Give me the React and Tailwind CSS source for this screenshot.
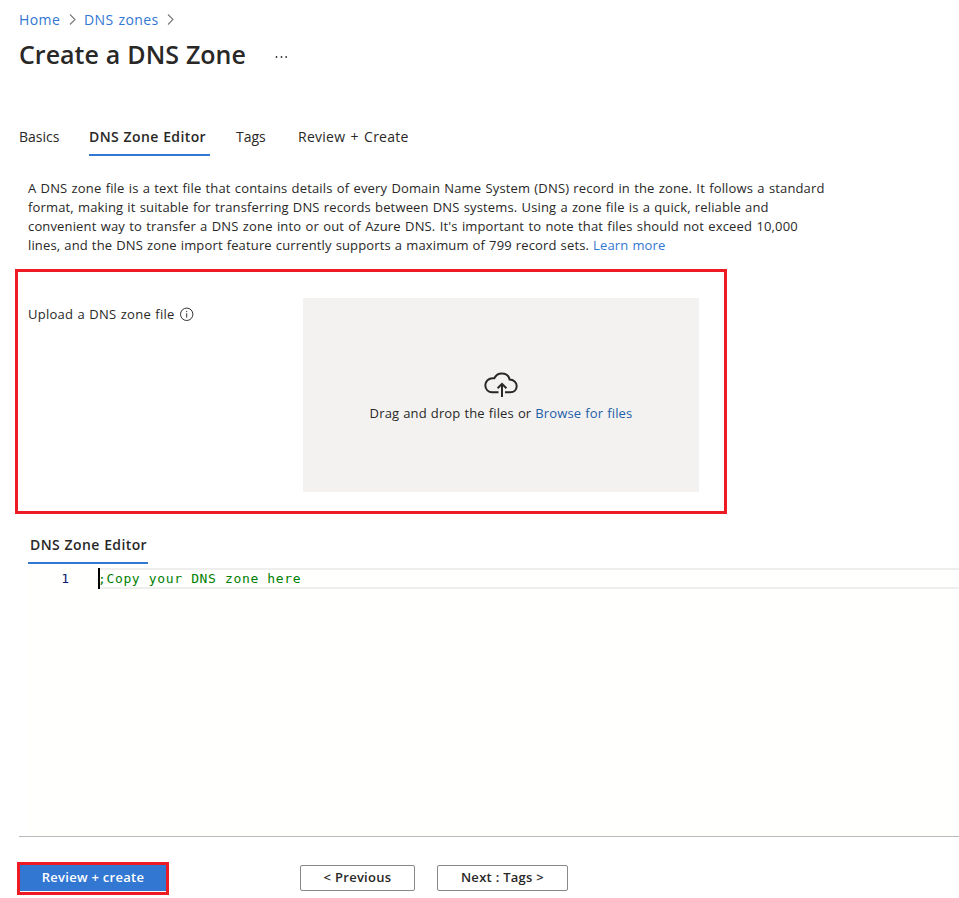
import React from "react";

function Chevron() {
  return (
    <svg className="h-[11px] w-[7px] shrink-0" viewBox="0 0 7 11" fill="none" stroke="#7a7978" strokeWidth="1.1">
      <path d="M1 .5 6 5.5 1 10.5" />
    </svg>
  );
}

function Breadcrumb() {
  return (
    <nav className="flex h-[38px] items-center pl-[19px] text-[14px] text-[#3277d2]">
      <a className="w-[50px] tracking-[0.4px]">Home</a>
      <Chevron />
      <a className="ml-[8px] w-[83px] tracking-[0.4px] [word-spacing:0.8px]">DNS zones</a>
      <Chevron />
    </nav>
  );
}

function Tabs() {
  return (
    <div className="mt-[44px] flex h-[38px] pl-[19px] text-[14px] leading-[38px]">
      <span className="w-[70px]">Basics</span>
      <span className="mr-[26px] w-[121px] border-b-2 border-[#3277d2] font-semibold tracking-[0.38px] [word-spacing:0.5px]">DNS Zone Editor</span>
      <span className="w-[62px]">Tags</span>
      <span className="tracking-[0.25px] [word-spacing:1.4px]">Review + Create</span>
    </div>
  );
}

function InfoIcon() {
  return (
    <svg className="ml-[5px] h-[14px] w-[14px] -translate-y-px" viewBox="0 0 14 14" fill="none" stroke="#323130">
      <circle cx="6.700" cy="7.300" r="6.2" />
      <path d="M6.700 6.300v4.300M6.700 3.900v1.200" />
    </svg>
  );
}

function CloudUpload() {
  return (
    <svg className="h-[26px] w-[34px]" viewBox="0 0 34 26" fill="none" stroke="#292827" strokeWidth="2">
      <path d="M14.5 20.3H8.2C4.400 20.300 1.300 17.400 1.300 13.300 1.300 9.300 4.700 6.200 8.600 6.200L10.300 6.300C11.800 3.200 14.400 1.400 17.700 1.400 21.900 1.400 24.900 3.800 25.600 7.600 29.600 7.700 32.700 10.400 32.700 14 32.700 17.700 30 20.300 26.400 20.300H21" />
      <path d="M18 25V12.200M13.600 16.200 18 11.800 22.400 16.200" />
    </svg>
  );
}

function UploadSection() {
  return (
    <section className="ml-[15px] mt-[14px] flex h-[245px] w-[712px] border-[3px] border-[#ed1c24] pl-[10px] pt-[26px] text-[13px] tracking-[0.15px]">
      <div className="flex h-[33px] w-[275px] items-center">
        <span className="tracking-[0.25px] [word-spacing:0.7px]">Upload a DNS zone file</span>
        <InfoIcon />
      </div>
      <div className="flex h-[194px] w-[396px] flex-col items-center bg-[#f3f2f1] pt-[74px]">
        <CloudUpload />
        <p className="mt-[5px] whitespace-nowrap leading-[20px] [word-spacing:0.45px]">
          Drag and drop the files or <a className="text-[#2260a8]">Browse for files</a>
        </p>
      </div>
    </section>
  );
}

function Editor() {
  return (
    <section className="ml-[28px] mt-[12px]">
      <div className="h-[38px] w-[120px] whitespace-nowrap border-b-2 border-[#3277d2] pl-[2px] text-[14px] font-semibold leading-[38px] tracking-[0.38px] [word-spacing:0.5px]">
        DNS Zone Editor
      </div>
      <div className="mt-[4px] flex h-[268px] bg-[#fffffe] font-['DejaVu_Sans_Mono',monospace] text-[13px]">
        <div className="h-[21px] w-[70px] pr-[29px] text-right leading-[21px] text-[#0b216f]">1</div>
        <div className="flex h-[21px] flex-1 items-center border-y-2 border-[#eeeeee] text-[#008000]">
          <span className="-my-[2px] h-[21px] w-[2px] shrink-0 bg-black" />
          <span className="-ml-[2px] tracking-[0.64px]">;Copy your DNS zone here</span>
        </div>
      </div>
    </section>
  );
}

function Footer() {
  return (
    <footer className="ml-[19px] border-t border-[#b8b8b8] text-[13px] font-semibold">
      <div className="-ml-[2px] mt-[25px] flex h-[33px] items-start tracking-[0.28px] [word-spacing:1.6px]">
        <div className="mr-[131px] h-[33px] w-[152px] border-[3px] border-[#ed1c24]">
          <button className="block h-[26px] w-full bg-[#3277d2] text-white">Review + create</button>
        </div>
        <button className="mr-[22px] mt-[3px] h-[26px] w-[115px] rounded-[2px] border border-[#8a8886]">&lt; Previous</button>
        <button className="mt-[3px] h-[26px] w-[131px] rounded-[2px] border border-[#8a8886]">Next : Tags &gt;</button>
      </div>
    </footer>
  );
}

export default function App() {
  return (
    <main className="h-[898px] w-[959px] overflow-hidden bg-white font-['Open_Sans','Noto_Sans',sans-serif] text-[#292827]">
      <Breadcrumb />
      <header className="flex h-[36px] items-center pl-[19px]">
        <h1 className="-mt-[2px] w-[256px] whitespace-nowrap text-[25px] font-semibold [word-spacing:0.5px]">Create a DNS Zone</h1>
        <svg className="mt-[2px] h-[2px] w-[12px]" viewBox="0 0 12 2" fill="#323130">
          <circle cx="1.500" cy="1" r=".9" />
          <circle cx="6.500" cy="1" r=".9" />
          <circle cx="11.200" cy="1" r=".9" />
        </svg>
      </header>
      <Tabs />
      <div className="mt-[23px] whitespace-nowrap pl-[28px] text-[13px] leading-[19px] tracking-[0.15px]">
        <p className="[word-spacing:0.7px]">A DNS zone file is a text file that contains details of every Domain Name System (DNS) record in the zone. It follows a standard</p>
        <p className="[word-spacing:0.6px]">format, making it suitable for transferring DNS records between DNS systems. Using a zone file is a quick, reliable and</p>
        <p className="[word-spacing:0.75px]">convenient way to transfer a DNS zone into or out of Azure DNS. It's important to note that files should not exceed 10,000</p>
        <p className="[word-spacing:0.45px]">lines, and the DNS zone import feature currently supports a maximum of 799 record sets. <a className="text-[#3277d2]">Learn more</a></p>
      </div>
      <UploadSection />
      <Editor />
      <Footer />
    </main>
  );
}
